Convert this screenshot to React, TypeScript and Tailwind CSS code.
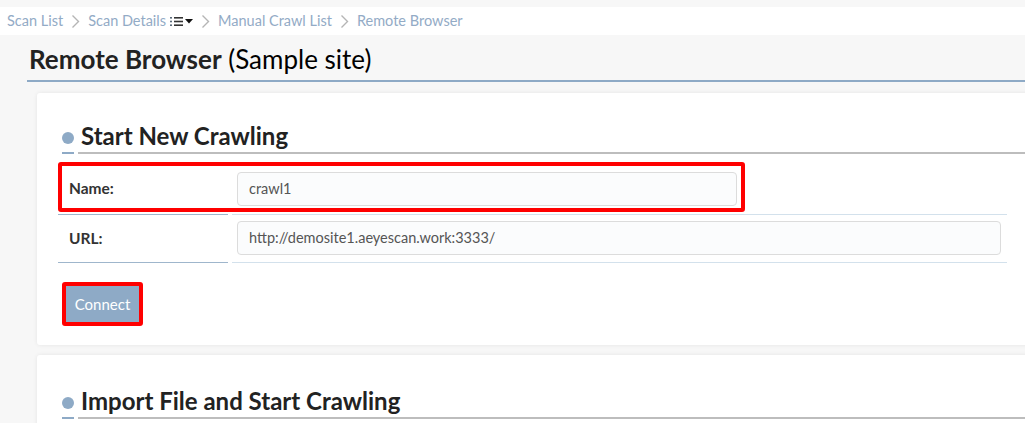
import React from "react";

function Chevron() {
  return (
    <svg width="9" height="15" viewBox="0 0 9 15" className="shrink-0">
      <path d="M1.5 1.5 L7.5 7.5 L1.5 13.5" fill="none" stroke="#b5b5b5" strokeWidth="1.4" />
    </svg>
  );
}

function ListCaret() {
  return (
    <span className="inline-flex items-center gap-[2px] ml-[4px]">
      <svg width="13" height="11" viewBox="0 0 13 11">
        <rect x="0" y="1" width="2" height="1.6" fill="#5b6b7b" />
        <rect x="0" y="4.7" width="2" height="1.6" fill="#5b6b7b" />
        <rect x="0" y="8.4" width="2" height="1.6" fill="#5b6b7b" />
        <rect x="4" y="1" width="9" height="1.6" fill="#333" />
        <rect x="4" y="4.7" width="9" height="1.6" fill="#333" />
        <rect x="4" y="8.4" width="9" height="1.6" fill="#333" />
      </svg>
      <svg width="8" height="5" viewBox="0 0 8 5">
        <path d="M0 0 L8 0 L4 4.5 Z" fill="#111" />
      </svg>
    </span>
  );
}

function SectionHeading({ title }: { title: string }) {
  return (
    <div className="flex items-end pl-[4px]">
      <div className="flex flex-col items-center w-[12px] mr-[4px]">
        <span className="w-[12px] h-[12px] rounded-full bg-[#8eaac6] mb-[8px]" />
        <span className="w-[12px] h-[2px] bg-[#8eaac6]" />
      </div>
      <div className="flex-1 border-b-2 border-[#bdbdbd] pl-[3px] text-[24px] leading-[33px] font-bold text-[#222]">
        {title}
      </div>
    </div>
  );
}

export default function App() {
  return (
    <div
      className="w-full h-[423px] overflow-hidden bg-[#f7f7f7]"
      style={{ fontFamily: "Lato, 'Noto Sans', sans-serif" }}
    >
      {/* breadcrumb */}
      <div className="pt-[7px]">
        <nav className="h-[28px] bg-white flex items-center pl-[7px] text-[14.5px] text-[#93abc6] gap-[8px]">
          <span>Scan List</span>
          <Chevron />
          <span className="flex items-center">
            Scan Details
            <ListCaret />
          </span>
          <Chevron />
          <span>Manual Crawl List</span>
          <Chevron />
          <span>Remote Browser</span>
        </nav>
      </div>

      <main className="pl-[27px]">
        <h1 className="pt-[8px] pb-[5px] pl-[2px] border-b-2 border-[#8eaac6] text-[26px] leading-[32px] text-[#222]">
          <span className="font-bold">Remote Browser</span>{" "}
          <span className="text-black">(Sample site)</span>
        </h1>

        <section className="ml-[10px] mt-[11px] w-[1010px] bg-white rounded-[3px] shadow-[0_0_4px_rgba(0,0,0,0.08)] pl-[21px] pt-[26px] pb-[23px]">
          <SectionHeading title="Start New Crawling" />

          <div className="w-[949px] mt-[9px]">
            {/* name row */}
            <div className="relative grid grid-cols-[170px_1fr] gap-x-[4px]">
              <div className="flex items-center pl-[11px] border-b border-[#9fb6cc] text-[15.5px] font-bold text-[#333]">
                Name:
              </div>
              <div className="pl-[5px] pt-[9px] pb-[8px] border-b border-[#d3e1ec]">
                <div className="w-[500px] h-[34px] rounded-[4px] border border-[#dcdcdc] bg-[#fbfcfd] flex items-center pl-[11px] text-[14.5px] text-[#555]">
                  crawl1
                </div>
              </div>
              <div className="absolute left-0 top-[-1px] w-[687px] h-[50px] border-4 border-[#ff0000] rounded-[3px] pointer-events-none" />
            </div>

            {/* url row */}
            <div className="grid grid-cols-[170px_1fr] gap-x-[4px]">
              <div className="flex items-center pl-[11px] border-b border-[#9fb6cc] text-[15.5px] font-bold text-[#333]">
                URL:
              </div>
              <div className="pl-[5px] pr-[6px] pt-[6px] pb-[7px] border-b border-[#d3e1ec]">
                <div className="h-[34px] rounded-[4px] border border-[#dcdcdc] bg-[#fbfcfd] flex items-center pl-[11px] text-[14.5px] text-[#555]">
                  http://demosite1.aeyescan.work:3333/
                </div>
              </div>
            </div>
          </div>

          <div className="mt-[23px] ml-[8px] relative w-[73px]">
            <button className="w-[73px] h-[36px] bg-[#8eaac6] text-white text-[15px]">Connect</button>
            <div className="absolute -inset-[4px] border-4 border-[#ff0000] rounded-[3px] pointer-events-none" />
          </div>
        </section>

        <section className="ml-[10px] mt-[10px] w-[1010px] h-[120px] bg-white rounded-[3px] shadow-[0_0_4px_rgba(0,0,0,0.08)] pl-[21px] pt-[29px]">
          <SectionHeading title="Import File and Start Crawling" />
        </section>
      </main>
    </div>
  );
}
